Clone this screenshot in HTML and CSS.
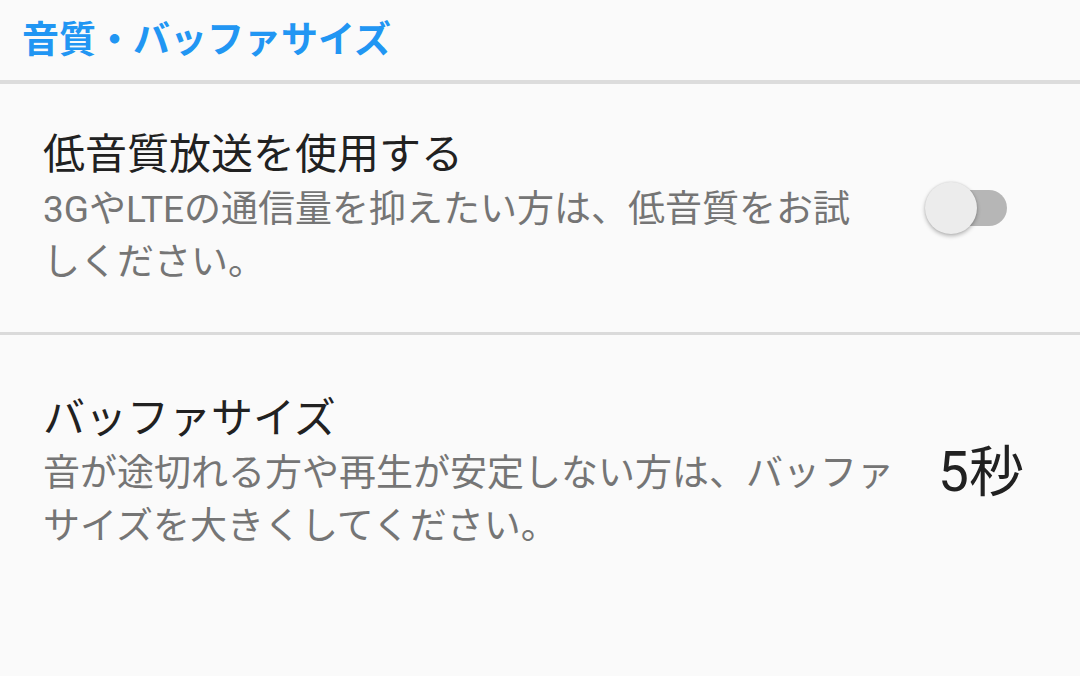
FILE: index.html
```html
<!DOCTYPE html>
<html lang="ja">
<head>
    <meta charset="UTF-8">
    <title>音質・バッファサイズ</title>
    <link rel="stylesheet" href="styles.css">
</head>
<body>
<div class="screen">
    <div class="category">音質・バッファサイズ</div>

    <div class="pref pref-switch">
        <div class="pref-text">
            <div class="pref-title">低音質放送を使用する</div>
            <div class="pref-summary">3GやLTEの通信量を抑えたい方は、低音質をお試しください。</div>
        </div>
        <div class="pref-widget">
            <div class="switch">
                <div class="switch-track"></div>
                <div class="switch-thumb"></div>
            </div>
        </div>
    </div>

    <div class="pref pref-value">
        <div class="pref-text">
            <div class="pref-title">バッファサイズ</div>
            <div class="pref-summary">音が途切れる方や再生が安定しない方は、バッファサイズを大きくしてください。</div>
        </div>
        <div class="pref-widget">
            <div class="value">5秒</div>
        </div>
    </div>
</div>
</body>
</html>
```

FILE: styles.css
```css
* {
    padding: 0;
    margin: 0;
    box-sizing: border-box;
}

body {
    background: #fafafa;
    font-family: Roboto, "Noto Sans CJK JP", sans-serif;
}

.screen {
    width: 1080px;
    height: 676px;
    overflow: hidden;
    background: #fafafa;
}

.category {
    height: 84px;
    padding: 14px 0 0 22px;
    font-size: 37px;
    line-height: 54px;
    font-weight: bold;
    color: #2196f3;
    border-bottom: 4px solid #dcdcdc;
}

.pref {
    display: flex;
    align-items: center;
}

.pref-switch {
    height: 251px;
    border-bottom: 3px solid #dadada;
    padding-left: 43px;
}

.pref-value {
    padding: 56px 0 0 43px;
}

.pref-text {
    flex: none;
}

.pref-switch .pref-text {
    width: 830px;
}

.pref-value .pref-text {
    width: 872px;
}

.pref-title {
    font-size: 42px;
    line-height: 56px;
    color: #212121;
}

.pref-summary {
    font-size: 37px;
    line-height: 53px;
    color: #757575;
}

.pref-widget {
    display: flex;
    align-items: center;
}

.switch {
    position: relative;
    width: 82px;
    height: 52px;
    margin-left: 52px;
}

.switch-track {
    position: absolute;
    left: 2px;
    top: 8px;
    width: 80px;
    height: 36px;
    border-radius: 18px;
    background: #b6b6b6;
}

.switch-thumb {
    position: absolute;
    left: 0;
    top: 0;
    width: 52px;
    height: 52px;
    border-radius: 50%;
    background: #ececec;
    box-shadow: 0 2px 4px rgba(0, 0, 0, 0.28), 0 0 2px rgba(0, 0, 0, 0.12);
}

.value {
    margin-left: 23px;
    font-size: 55px;
    line-height: 64px;
    color: #212121;
}
```
